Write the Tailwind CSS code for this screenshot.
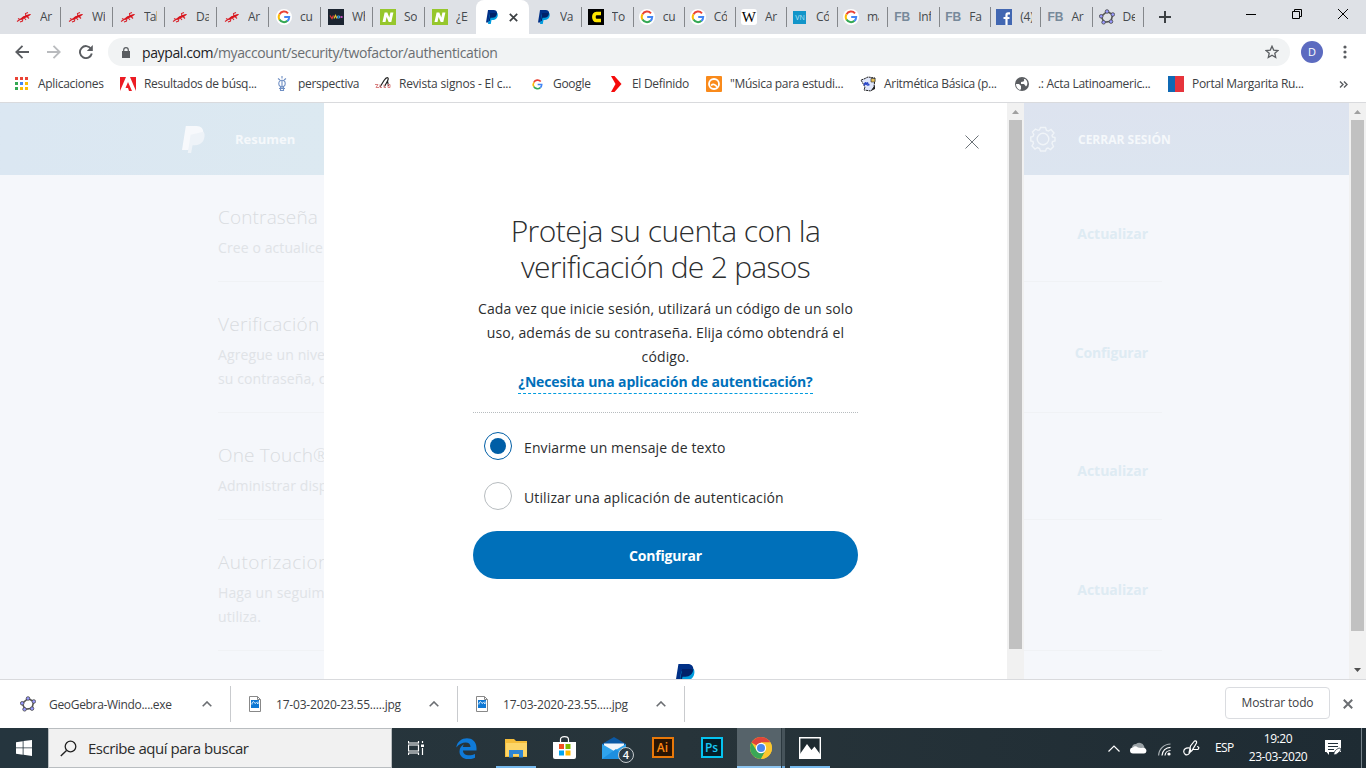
<!DOCTYPE html>
<html lang="es">
<head>
<meta charset="utf-8">
<title>PayPal</title>
<script src="https://cdn.jsdelivr.net/npm/@tailwindcss/browser@4"></script>
</head>
<body class="w-[1366px] h-[768px] overflow-hidden bg-white font-['Open_Sans','Noto_Sans',sans-serif] text-[#3c4043] flex flex-col">
<svg class="hidden">
  <symbol id="red" viewBox="0 0 16 16"><path d="M1 12.500L4 10.500L2 9.500M4 10.500L7 8.500L11 6.500L14.500 5.500M10 7.500L9.500 4.500L12 3.500M11 7.500L13 9.500M7 8.500L6.500 12L4 13M8 8.500L10 11" fill="none" stroke="#d8242c" stroke-width="1.100"/><path d="M4 10.500L7 7.500L11 6L15 5L12.500 7.500L8 9.500L5 11Z" fill="#d8141c"/></symbol>
  <symbol id="g" viewBox="0 0 16 16"><circle cx="8" cy="8" r="8" fill="#fff"/><path d="M12 4.300A5.200 5.200 0 0 0 3.500 5.400" fill="none" stroke="#ea4335" stroke-width="2"/><path d="M3.500 5.300A5.200 5.200 0 0 0 3.500 10.700" fill="none" stroke="#fbbc05" stroke-width="2"/><path d="M3.500 10.600A5.200 5.200 0 0 0 11.500 11.800" fill="none" stroke="#34a853" stroke-width="2"/><path d="M8.200 8H13.200A5.200 5.200 0 0 1 11.400 11.900" fill="none" stroke="#4285f4" stroke-width="2"/></symbol>
  <symbol id="n" viewBox="0 0 16 16"><path d="M0 0H16V16H0Z" fill="#96c72c"/><path d="M2.500 13L4.600 3.500H7.300L9.300 8.500L10.400 3.500H13.400L11.300 13H8.700L6.600 8L5.500 13Z" fill="#fff"/></symbol>
  <symbol id="pp" viewBox="0 0 24 28"><path d="M4 0H15C20 0 23 3 22 8C21 13 17.500 15.500 12.500 15.500H9L7 25H0Z" fill="#003087"/><path d="M22.500 6C25 9 23.500 20 13.500 20H11L9.500 28H4L7.500 9Z" fill="#009cde"/><path d="M8.500 6H19.500L22.300 6.500C21.300 12.500 18 15.500 12.500 15.500H9L7.500 22H5.500Z" fill="#012169"/></symbol>
  <symbol id="geo" viewBox="0 0 16 16"><path d="M8 2.500L13.700 5.500L12 12.300L5 13.300L2.300 7.500Z" fill="none" stroke="#555" stroke-width="1.600"/><g fill="#9999ff" stroke="#444" stroke-width=".8"><circle cx="8" cy="2.500" r="1.800"/><circle cx="13.800" cy="5.500" r="1.800"/><circle cx="12" cy="12.600" r="1.800"/><circle cx="4.600" cy="13.300" r="1.800"/><circle cx="2.200" cy="7.300" r="1.800"/></g></symbol>
  <symbol id="jpg" viewBox="0 0 12 16"><path d="M.5.5H8.500L11.500 3.500V15.500H.5Z" fill="#fff" stroke="#888"/><path d="M8.500.5V3.500H11.500" fill="none" stroke="#888"/><path d="M2 4H10V12H2Z" fill="#0f78d4"/><path d="M3 8.500V6.800L4.500 5.500L6 7.500L7.500 6.500L9 8V5.500" fill="none" stroke="#d5eafb" stroke-width="1"/></symbol>
  <symbol id="up" viewBox="0 0 10 6"><path d="M.7 5.300L5 1L9.300 5.300" fill="none" stroke="#6b6e72" stroke-width="1.600"/></symbol>
</svg>

<!-- tab strip -->
<div class="h-[34px] shrink-0 bg-[#dee1e6] flex text-[12px] leading-4 tracking-[-0.3px] text-[#45494d]">
  <div class="flex pl-[9px] w-[476px] shrink-0">
    <div class="w-[52px] shrink-0 flex items-center pl-[7px] gap-2"><svg class="size-4 shrink-0"><use href="#red"/></svg><span class="w-[13px] overflow-hidden whitespace-nowrap">Ar</span><i class="ml-auto -mr-px w-px h-5 bg-[#84878b] shrink-0 relative right-px"></i></div>
    <div class="w-[52px] shrink-0 flex items-center pl-[7px] gap-2"><svg class="size-4 shrink-0"><use href="#red"/></svg><span class="w-[13px] overflow-hidden whitespace-nowrap">Wi</span><i class="ml-auto -mr-px w-px h-5 bg-[#84878b] shrink-0 relative right-px"></i></div>
    <div class="w-[52px] shrink-0 flex items-center pl-[7px] gap-2"><svg class="size-4 shrink-0"><use href="#red"/></svg><span class="w-[13px] overflow-hidden whitespace-nowrap tracking-[-0.8px]">Tal</span><i class="ml-auto -mr-px w-px h-5 bg-[#84878b] shrink-0 relative right-px"></i></div>
    <div class="w-[52px] shrink-0 flex items-center pl-[7px] gap-2"><svg class="size-4 shrink-0"><use href="#red"/></svg><span class="w-[13px] overflow-hidden whitespace-nowrap">Da</span><i class="ml-auto -mr-px w-px h-5 bg-[#84878b] shrink-0 relative right-px"></i></div>
    <div class="w-[52px] shrink-0 flex items-center pl-[7px] gap-2"><svg class="size-4 shrink-0"><use href="#red"/></svg><span class="w-[13px] overflow-hidden whitespace-nowrap">Ar</span><i class="ml-auto -mr-px w-px h-5 bg-[#84878b] shrink-0 relative right-px"></i></div>
    <div class="w-[52px] shrink-0 flex items-center pl-[7px] gap-2"><svg class="size-4 shrink-0"><use href="#g"/></svg><span class="w-[13px] overflow-hidden whitespace-nowrap">cu</span><i class="ml-auto -mr-px w-px h-5 bg-[#84878b] shrink-0 relative right-px"></i></div>
    <div class="w-[52px] shrink-0 flex items-center pl-[7px] gap-2"><svg class="size-4 shrink-0" viewBox="0 0 16 16"><path d="M0 0H16V16H0Z" fill="#1b2430"/><path d="M2 6.500L4 9.500L5.500 6.500" stroke="#e23b3b" fill="none" stroke-width="1.300"/><path d="M6 9.500L7.500 6.500L9 9.500" stroke="#e0c030" fill="none" stroke-width="1.300"/><path d="M9.500 7H11.500V9H9.500Z" stroke="#3aa0e0" fill="none"/><path d="M12.500 8H14.500" stroke="#c050c0" stroke-width="2"/></svg><span class="w-[13px] overflow-hidden whitespace-nowrap">Wh</span><i class="ml-auto -mr-px w-px h-5 bg-[#84878b] shrink-0 relative right-px"></i></div>
    <div class="w-[52px] shrink-0 flex items-center pl-[7px] gap-2"><svg class="size-4 shrink-0"><use href="#n"/></svg><span class="w-[13px] overflow-hidden whitespace-nowrap">So</span><i class="ml-auto -mr-px w-px h-5 bg-[#84878b] shrink-0 relative right-px"></i></div>
    <div class="w-[51px] shrink-0 flex items-center pl-[7px] gap-2"><svg class="size-4 shrink-0"><use href="#n"/></svg><span class="w-[12px] overflow-hidden whitespace-nowrap">¿Es</span></div>
  </div>
  <div class="w-[53px] shrink-0 bg-white rounded-t-lg flex items-center pl-[10px] gap-[11px]"><svg class="w-[12px] h-[14px]" viewBox="0 0 24 28"><use href="#pp"/></svg><svg class="size-[9px]" viewBox="0 0 9 9"><path d="M.8.8L8.200 8.200M8.200.8L.8 8.200" stroke="#3c4043" stroke-width="1.700"/></svg></div>
  <div class="flex w-[615px] shrink-0">
    <div class="w-[51.1px] shrink-0 flex items-center pl-[7px] gap-2"><svg class="w-4 h-[14px] shrink-0"><use href="#pp"/></svg><span class="w-[13px] shrink-0 overflow-hidden whitespace-nowrap">Va</span><i class="ml-auto w-px h-5 bg-[#84878b] shrink-0"></i></div>
    <div class="w-[51.1px] shrink-0 flex items-center pl-[7.500px] gap-2"><svg class="size-4 shrink-0" viewBox="0 0 16 16"><path d="M0 0H16V16H0Z" fill="#000"/><path d="M13 4.500H8.500C5 4.500 5 11.500 8.500 11.500H13" fill="none" stroke="#ffe600" stroke-width="3.600"/></svg><span class="w-[13px] shrink-0 overflow-hidden whitespace-nowrap">To</span><i class="ml-auto w-px h-5 bg-[#84878b] shrink-0"></i></div>
    <div class="w-[51.1px] shrink-0 flex items-center pl-[7.500px] gap-2"><svg class="size-4 shrink-0"><use href="#g"/></svg><span class="w-[13px] shrink-0 overflow-hidden whitespace-nowrap">cu</span><i class="ml-auto w-px h-5 bg-[#84878b] shrink-0"></i></div>
    <div class="w-[51.1px] shrink-0 flex items-center pl-[7.500px] gap-2"><svg class="size-4 shrink-0"><use href="#g"/></svg><span class="w-[13px] shrink-0 overflow-hidden whitespace-nowrap">Có</span><i class="ml-auto w-px h-5 bg-[#84878b] shrink-0"></i></div>
    <div class="w-[51.1px] shrink-0 flex items-center pl-[7.500px] gap-2"><b class="size-4 shrink-0 rounded-[3px] bg-white text-black font-normal font-['Liberation_Serif',serif] text-[15px] leading-4 tracking-normal flex justify-center">W</b><span class="w-[13px] shrink-0 overflow-hidden whitespace-nowrap">Ar</span><i class="ml-auto w-px h-5 bg-[#84878b] shrink-0"></i></div>
    <div class="w-[51.1px] shrink-0 flex items-center pl-[7.500px] gap-2"><b class="w-[13px] h-[13px] mx-[1.500px] shrink-0 bg-[#1295c9] text-[#bfe6f6] font-normal text-[7px] leading-[13px] text-center tracking-normal">VN</b><span class="w-[13px] shrink-0 overflow-hidden whitespace-nowrap">Có</span><i class="ml-auto w-px h-5 bg-[#84878b] shrink-0"></i></div>
    <div class="w-[51.1px] shrink-0 flex items-center pl-[7.500px] gap-2"><svg class="size-4 shrink-0"><use href="#g"/></svg><span class="w-[12px] shrink-0 overflow-hidden whitespace-nowrap">ma</span><i class="ml-auto w-px h-5 bg-[#84878b] shrink-0"></i></div>
    <div class="w-[51.1px] shrink-0 flex items-center pl-[7.500px] gap-2"><b class="w-4 shrink-0 text-[#77899a] font-bold font-['Liberation_Sans',sans-serif] text-[12px] tracking-normal">FB</b><span class="w-[13px] shrink-0 overflow-hidden whitespace-nowrap">Inf</span><i class="ml-auto w-px h-5 bg-[#84878b] shrink-0"></i></div>
    <div class="w-[51.1px] shrink-0 flex items-center pl-[7.500px] gap-2"><b class="w-4 shrink-0 text-[#77899a] font-bold font-['Liberation_Sans',sans-serif] text-[12px] tracking-normal">FB</b><span class="w-[13px] shrink-0 overflow-hidden whitespace-nowrap">Fa</span><i class="ml-auto w-px h-5 bg-[#84878b] shrink-0"></i></div>
    <div class="w-[51.1px] shrink-0 flex items-center pl-[7.500px] gap-2"><svg class="size-4 shrink-0" viewBox="0 0 16 16"><path d="M0 0H16V16H0Z" fill="#4267b2"/><path d="M14 4.300H12C10.800 4.300 10.500 5 10.500 6V16M7.500 9H13.500" fill="none" stroke="#fff" stroke-width="2.200"/></svg><span class="w-[12px] shrink-0 overflow-hidden whitespace-nowrap">(4)</span><i class="ml-auto w-px h-5 bg-[#84878b] shrink-0"></i></div>
    <div class="w-[51.1px] shrink-0 flex items-center pl-[7.500px] gap-2"><b class="w-4 shrink-0 text-[#77899a] font-bold font-['Liberation_Sans',sans-serif] text-[12px] tracking-normal">FB</b><span class="w-[13px] shrink-0 overflow-hidden whitespace-nowrap">Ar</span><i class="ml-auto w-px h-5 bg-[#84878b] shrink-0"></i></div>
    <div class="w-[51.1px] shrink-0 flex items-center pl-[7.500px] gap-2"><svg class="size-4 shrink-0"><use href="#geo"/></svg><span class="w-[12px] shrink-0 overflow-hidden whitespace-nowrap">De</span><i class="ml-auto w-px h-5 bg-[#84878b] shrink-0"></i></div>
  </div>
  <div class="flex-1 flex pl-[15px]">
    <svg class="size-3 mt-[11px]" viewBox="0 0 12 12"><path d="M6 0V12M0 6H12" stroke="#3c4043" stroke-width="2"/></svg>
    <svg class="w-[10px] h-[10px] ml-[75px] mt-[9px]" viewBox="0 0 10 10"><path d="M0 5.500H10" stroke="#000"/></svg>
    <svg class="w-[10px] h-[10px] ml-[36px] mt-[9px]" viewBox="0 0 10 10"><path d="M.5 2.500H7.500V9.500H.5ZM2.500 2.500V.5H9.500V7.500H7.500" stroke="#000" fill="none"/></svg>
    <svg class="w-[10px] h-[10px] ml-[36px] mt-[9px]" viewBox="0 0 10 10"><path d="M0 0L10 10M10 0L0 10" stroke="#000"/></svg>
  </div>
</div>

<!-- toolbar -->
<div class="h-[36px] shrink-0 flex items-center pl-[15px]">
  <svg class="w-[14px] h-[14px]" viewBox="0 0 14 14"><path d="M14 7H1.500M7.500 .8L1.300 7L7.500 13.200" fill="none" stroke="#5a5d61" stroke-width="1.800"/></svg>
  <svg class="w-[14px] h-[14px] ml-[18px]" viewBox="0 0 14 14"><path d="M0 7H12.500M6.500 .8L12.700 7L6.500 13.200" fill="none" stroke="#b9bbbe" stroke-width="1.800"/></svg>
  <svg class="w-[14px] h-[14px] ml-[18px]" viewBox="0 0 14 14"><path d="M12 3.800A6 6 0 1 0 12.800 8.500" fill="none" stroke="#5a5d61" stroke-width="1.900"/><path d="M13.800 0V6H7.800Z" fill="#5a5d61"/></svg>
  <div class="ml-[15px] w-[1182px] h-[28px] rounded-full bg-[#f1f3f4] flex items-center pl-[14px] pr-[11px]">
    <svg class="w-[8px] h-[11px]" viewBox="0 0 8 11"><path d="M0 4H8V11H0Z" fill="#5a5d61"/><path d="M1.700 4.500V3A2.300 2.300 0 0 1 6.300 3V4.500" fill="none" stroke="#5a5d61" stroke-width="1.200"/></svg>
    <span class="ml-[12px] text-[14px] tracking-[-0.38px] text-[#6a6e72] whitespace-nowrap"><span class="text-[#202124]">paypal.com</span>/myaccount/security/twofactor/authentication</span>
    <svg class="size-[14px] ml-auto" viewBox="0 0 14 14"><path d="M7 1.200L8.700 5.100L13 5.500L9.800 8.300L10.700 12.500L7 10.300L3.300 12.500L4.200 8.300L1 5.500L5.300 5.100Z" fill="none" stroke="#5a5d61" stroke-width="1.300"/></svg>
  </div>
  <span class="ml-[11px] size-[22px] rounded-full bg-[#5c6bc0] text-white text-[11px] flex items-center justify-center">D</span>
  <svg class="w-[4px] h-[14px] ml-[20px]" viewBox="0 0 4 14"><g fill="#5a5d61"><circle cx="2" cy="2" r="1.600"/><circle cx="2" cy="7" r="1.600"/><circle cx="2" cy="12" r="1.600"/></g></svg>
</div>

<!-- bookmarks -->
<div class="h-[33px] shrink-0 border-b border-[#d9dadd] flex items-center pb-[4px] pl-[14px] text-[12px] tracking-[-0.3px] whitespace-nowrap">
  <div class="w-[106px] shrink-0 flex items-center gap-2"><svg class="size-4" viewBox="0 0 16 16"><path d="M1 1h3v3H1Z" fill="#ea4335"/><path d="M6 1h3v3H6ZM11 1h3v3H11Z" fill="#ea4335"/><path d="M1 6h3v3H1ZM1 11h3v3H1Z" fill="#34a853"/><path d="M6 6h3v3H6Z" fill="#4285f4"/><path d="M11 6h3v3H11ZM6 11h3v3H6ZM11 11h3v3H11Z" fill="#fbbc05"/></svg><span>Aplicaciones</span></div>
  <div class="w-[154px] shrink-0 flex items-center gap-2"><svg class="size-4" viewBox="0 0 16 16"><path d="M0 1H6L0 15ZM10 1H16V15ZM8 6L12 15H9L8 12H5.500Z" fill="#ec1c24"/></svg><span>Resultados de búsq...</span></div>
  <div class="w-[101px] shrink-0 flex items-center gap-2"><svg class="size-4" viewBox="0 0 16 16"><g fill="none" stroke="#6f8fc4" stroke-width="1.100"><circle cx="8" cy="7.500" r="3.200"/><path d="M8 4V10M6.500 11H9.500V14.500H6.500ZM4 2.500L6 4M8 0V2.500M12 2.500L10 4M5 12.500H11"/></g></svg><span>perspectiva</span></div>
  <div class="w-[154px] shrink-0 flex items-center gap-2"><svg class="size-4" viewBox="0 0 16 16"><path d="M5 11L9 4.500C12 0 14.500 1.500 12.500 5L9.500 10.500M12.500 5L13.500 10" fill="none" stroke="#222" stroke-width="1.200"/><path d="M0 8.500H3L1 11.500H4M5 8.500V11.500H7M9 8.500V11.500H11M13 8.500H15V11.500H13Z" fill="none" stroke="#d98080"/></svg><span class="tracking-[-0.18px]">Revista signos - El c...</span></div>
  <div class="w-[79px] shrink-0 flex items-center gap-2"><svg class="size-[13px] mx-[1.500px]" viewBox="0 0 16 16"><use href="#g"/></svg><span>Google</span></div>
  <div class="w-[98px] shrink-0 flex items-center gap-2"><svg class="size-4" viewBox="0 0 16 16"><path d="M3 0H6.500L13.500 8L6.500 16H3L7.500 8Z" fill="#f50a0a"/></svg><span>El Definido</span></div>
  <div class="w-[154px] shrink-0 flex items-center gap-2"><svg class="size-4" viewBox="0 0 16 16"><rect width="16" height="16" rx="1" fill="#f98a1b"/><circle cx="8" cy="8" r="5" fill="none" stroke="#fff" stroke-width="1.800"/><path d="M5 9.500Q8 6.500 11.500 11.500" fill="none" stroke="#fff" stroke-width="1.500"/></svg><span>"Música para estudi...</span></div>
  <div class="w-[154px] shrink-0 flex items-center gap-2"><svg class="size-4" viewBox="0 0 16 16"><path d="M4 3L8 1L15 2L14 11L11 15L4 14L5 11L1 4Z" fill="#dfe6fa" stroke="#222" stroke-dasharray="2 .6"/><path d="M4 9.500C5 6 6 6 6 9C7 6 8 6 8 9L9.500 8.500" fill="none" stroke="#2846c8" stroke-width="1.500"/><path d="M11 2.500H15V6H11Z" fill="#e8c25a" stroke="#222" stroke-width=".6"/><path d="M11 15L15 9V13Z" fill="#222"/></svg><span>Aritmética Básica (p...</span></div>
  <div class="w-[154px] shrink-0 flex items-center gap-2"><svg class="size-4" viewBox="0 0 16 16"><circle cx="8" cy="8" r="7" fill="#5a5d61"/><path d="M2 8H5L7 10V13L6 14C3 13 2 10 2 8ZM8 2.500C10 2 11 4 9.500 5.500L7 6V8H10L12 10.500C14 9 14 5 11 3Z" fill="#fff"/></svg><span>.: Acta Latinoameric...</span></div>
  <div class="w-[171px] shrink-0 flex items-center gap-2"><span class="size-4 flex"><i class="w-[7px] bg-[#0f69b4]"></i><i class="w-[9px] bg-[#e6343c]"></i></span><span>Portal Margarita Ru...</span></div>
  <svg class="w-[9px] h-[7px]" viewBox="0 0 9 7"><path d="M1 .5L4 3.500L1 6.500M5 .5L8 3.500L5 6.500" fill="none" stroke="#5a5d61" stroke-width="1.400"/></svg>
</div>

<!-- page -->
<div class="h-[576px] shrink-0 flex overflow-hidden bg-[#f5f7fb]">
  <div class="w-[324px] shrink-0 overflow-hidden">
    <div class="h-[72px] bg-linear-to-r from-[#dbe7f2] to-[#dce9f1] flex items-center pl-[182px]">
      <svg class="w-[23px] h-[27px]" viewBox="0 0 24 28"><path d="M4 0H15C20 0 23 3 22 8C21 13 17.500 15.500 12.500 15.500H9L7 25H0Z" fill="#f7f9fc"/><path d="M22.500 6C25 9 23.500 20 13.500 20H11L9.500 28H6L9 9Z" fill="#eef3f8"/></svg>
      <span class="ml-[30px] mt-px text-[13px] font-bold text-[#f5f8fb]">Resumen</span>
    </div>
    <div class="pl-[218px] whitespace-nowrap text-[14px] leading-6 text-[#e0e3e7] tracking-[0.1px]">
      <div class="h-[107px] pt-[30px] border-b border-[#f0f2f5]"><h3 class="text-[19px] leading-6 mb-[7px] font-light text-[#d9dce0] tracking-[0.15px]">Contraseña</h3><p>Cree o actualice</p></div>
      <div class="h-[131px] pt-[30px] border-b border-[#f0f2f5]"><h3 class="text-[19px] leading-6 mb-[7px] font-light text-[#d9dce0] tracking-[0.3px]">Verificación</h3><p>Agregue un nivel</p><p>su contraseña, co</p></div>
      <div class="h-[107px] pt-[30px] border-b border-[#f0f2f5]"><h3 class="text-[19px] leading-6 mb-[7px] font-light text-[#d9dce0] tracking-[0.15px]">One Touch®</h3><p>Administrar dispositivos</p></div>
      <div class="h-[131px] pt-[30px] border-b border-[#f0f2f5]"><h3 class="text-[19px] leading-6 mb-[7px] font-light text-[#d9dce0] tracking-[0.45px]">Autorizaciones</h3><p>Haga un seguimiento</p><p>utiliza.</p></div>
    </div>
  </div>

  <div class="w-[683px] shrink-0 bg-white flex flex-col items-center overflow-hidden">
    <div class="self-stretch flex justify-end pr-[28px] pt-[32px]"><svg class="size-[14px]" viewBox="0 0 14 14"><path d="M.5.5L13.500 13.500M13.500.5L.5 13.500" stroke="#6c7378" stroke-width="1"/></svg></div>
    <div class="w-[385px] mt-[65px] flex flex-col items-center text-[#2c2e2f] tracking-[0.12px]">
      <h1 class="text-[30px] leading-9 font-light text-center whitespace-nowrap tracking-[-0.56px] -mt-px mb-px"><span class="block">Proteja su cuenta con la</span><span class="block tracking-[-0.7px]">verificación de 2 pasos</span></h1>
      <p class="mt-[11px] text-[14px] leading-6 text-center whitespace-nowrap">Cada vez que inicie sesión, utilizará un código de un solo<br>uso, además de su contraseña. Elija cómo obtendrá el<br>código.</p>
      <a class="mt-px h-[24px] border-b border-dashed border-[#009cde] text-[14px] leading-6 font-bold text-[#0070ba] whitespace-nowrap tracking-[-0.14px]">¿Necesita una aplicación de autenticación?</a>
      <div class="mt-[18px] self-stretch border-b border-dotted border-[#b7bcbf]"></div>
      <div class="self-stretch flex flex-col pl-[11px] pt-[19px] gap-[22px]">
        <label class="flex items-center h-7 text-[14px]"><span class="size-7 rounded-full border border-[#005ea6] flex items-center justify-center"><i class="size-4 rounded-full bg-[#005ea6]"></i></span><span class="ml-[12px] mt-[3px]">Enviarme un mensaje de texto</span></label>
        <label class="flex items-center h-7 text-[14px]"><span class="size-7 rounded-full border border-[#b7bcbf]"></span><span class="ml-[12px] mt-[3px]">Utilizar una aplicación de autenticación</span></label>
      </div>
      <button class="mt-[21px] self-stretch h-12 rounded-full bg-[#0070ba] text-white font-bold text-[14px] tracking-[-0.2px]">Configurar</button>
      <svg class="mt-[85px] ml-[39px] w-[20px] h-[23px]" viewBox="0 0 24 28"><use href="#pp"/></svg>
    </div>
  </div>
  <div class="w-[17px] shrink-0 bg-[#f1f1f1] flex flex-col items-center"><svg class="w-[7px] h-[4px] mt-[7px] mb-[6px]" viewBox="0 0 7 4"><path d="M0 4L3.500 0L7 4Z" fill="#a0a0a0"/></svg><div class="w-[13px] h-[529px] bg-[#c1c1c1]"></div></div>
  <div class="w-[325px] shrink-0">
    <div class="h-[72px] bg-linear-to-b from-[#dde3ef] to-[#dce5f0] flex items-center pl-[6px]">
      <svg class="size-[26px]" viewBox="0 0 26 26"><g fill="none" stroke="#f0f4f8" stroke-width="1.400"><circle cx="13" cy="13" r="5.800"/><path d="M10.500 1.500H15.500L16.500 4.500L18.500 5L21 3.500L24 7L22 9.500L22.500 11L25 11.500V15L22.500 15.500L22 17.500L23.500 20.500L20.500 23.500L18 22L16.500 22.500L15.500 25H10.500L9.500 22.500L7.500 21.500L5 23L2 20L3.500 17.500L3 15.500L.8 15V11L3 10.500L3.800 8.500L2.500 6L5.500 3L8 4.300L9.500 4Z"/></g></svg>
      <span class="ml-[22px] mt-px text-[12px] font-bold text-[#f5f8fb] tracking-[0px]">CERRAR SESIÓN</span>
    </div>
    <div class="w-[138px] text-right text-[14px] font-bold leading-6 tracking-[0px] text-[#deebf3]">
      <div class="h-[107px] pt-[47px] pr-[14px] border-b border-[#f0f2f5]">Actualizar</div>
      <div class="h-[131px] pt-[59px] pr-[14px] border-b border-[#f0f2f5] tracking-[-0.15px]">Configurar</div>
      <div class="h-[107px] pt-[46px] pr-[14px] border-b border-[#f0f2f5]">Actualizar</div>
      <div class="h-[131px] pt-[58px] pr-[14px] border-b border-[#f0f2f5]">Actualizar</div>
    </div>
  </div>
  <div class="w-[17px] shrink-0 bg-[#f1f1f1] flex flex-col items-center"><svg class="w-[7px] h-[4px] mt-[7px] mb-[6px] shrink-0" viewBox="0 0 7 4"><path d="M0 4L3.500 0L7 4Z" fill="#a0a0a0"/></svg><div class="w-[13px] h-[511px] shrink-0 bg-[#c1c1c1]"></div><svg class="w-[7px] h-[4px] mt-[37px] shrink-0" viewBox="0 0 7 4"><path d="M0 0L3.500 4L7 0Z" fill="#505050"/></svg></div>
</div>

<!-- downloads bar -->
<div class="h-[49px] shrink-0 border-t border-[#d9dadd] flex items-center text-[12px] tracking-[-0.2px] whitespace-nowrap">
  <div class="w-[231px] h-9 shrink-0 border-r border-[#c9cbce] flex items-center pl-[20px]"><svg class="size-4"><use href="#geo"/></svg><span class="ml-[13px] mt-0.5 w-[150px] tracking-[-0.32px]">GeoGebra-Windo....exe</span><svg class="ml-[3px] w-[10px] h-[6px]"><use href="#up"/></svg></div>
  <div class="w-[227px] h-9 shrink-0 border-r border-[#c9cbce] flex items-center pl-[18px]"><svg class="w-3 h-4"><use href="#jpg"/></svg><span class="ml-[15px] mt-0.5 w-[150px]">17-03-2020-23.55.....jpg</span><svg class="ml-[3px] w-[10px] h-[6px]"><use href="#up"/></svg></div>
  <div class="w-[227px] h-9 shrink-0 border-r border-[#c9cbce] flex items-center pl-[18px]"><svg class="w-3 h-4"><use href="#jpg"/></svg><span class="ml-[15px] mt-0.5 w-[150px]">17-03-2020-23.55.....jpg</span><svg class="ml-[3px] w-[10px] h-[6px]"><use href="#up"/></svg></div>
  <div class="ml-auto w-[105px] h-8 mb-[2px] border border-[#dadce0] rounded flex items-center justify-center text-[#3c4043] font-medium tracking-[-0.15px]">Mostrar todo</div>
  <svg class="ml-[13px] mr-[13px] size-[10px]" viewBox="0 0 10 10"><path d="M.8.8L9.200 9.200M9.200.8L.8 9.200" stroke="#6b6e72" stroke-width="2"/></svg>
</div>

<!-- taskbar -->
<div class="h-[40px] shrink-0 bg-linear-to-r from-[#25353e] via-[#27343a] to-[#1e2b33] flex text-white">
  <div class="w-[48px] shrink-0 flex items-center justify-center"><svg class="size-4" viewBox="0 0 16 16"><path d="M0 2.200L6.700 1.200V7.500H0ZM7.500 1.100L16 0V7.500H7.500ZM0 8.300H6.700V14.700L0 13.800ZM7.500 8.300H16V16L7.500 14.800Z" fill="#fff"/></svg></div>
  <div class="w-[344px] shrink-0 bg-[#f1f1f1] border border-[#b9bdc0] flex items-center pl-[11px] text-[#2b2b2b]"><svg class="size-[17px]" viewBox="0 0 17 17"><circle cx="10.500" cy="6.500" r="5.300" fill="none" stroke="#222" stroke-width="1.300"/><path d="M6.500 10.500L.8 16" stroke="#222" stroke-width="1.400"/></svg><span class="ml-[11px] text-[15px] tracking-[-0.46px]">Escribe aquí para buscar</span></div>
  <div class="w-[47px] flex items-center justify-center"><svg class="size-4" viewBox="0 0 16 16"><path d="M.5 1V3H10.500V1M.5 15V13H10.500V15M.5 5H10.500V11H.5ZM14.500 1V3M14.500 8V15" fill="none" stroke="#fff" stroke-width="1.200"/><path d="M13 4.500H16V7H13Z" fill="#fff"/></svg></div>
  <div class="w-[53px] pl-px flex items-center justify-center"><svg class="size-[21px]" viewBox="0 0 21 21"><path d="M.3 9.500C1.500-2.500 20.500-3.500 20.500 10V12.500H7C7 18.500 15 18 19 16V19.700C11 23.500 3.500 20 3.500 13.500C3.500 10 5.500 7.500 8 6.200C7.200 7.200 7 8 6.800 9H14.500C14.500 2.500 5 3.500 .3 9.500Z" fill="#0f7ad8"/></svg></div>
  <div class="w-[48px] flex flex-col items-center"><svg class="w-[22px] h-[19px] mt-[11px]" viewBox="0 0 22 19"><path d="M0 0H9L11 2H22V18H0Z" fill="#f5bd3a"/><path d="M1 4H22V17H1Z" fill="#fdd568"/><path d="M4 18.500V11H18V18.500H14V15H8V18.500Z" fill="#2f86d6"/></svg><i class="mt-auto w-[40px] h-[2px] bg-[#76b9ed]"></i></div>
  <div class="w-[49px] flex justify-center"><svg class="w-[23px] h-[23px] mt-[8px]" viewBox="0 0 23 23"><path d="M7.500 6V3.500Q7.500.7 11.500.7T15.500 3.500V6" fill="none" stroke="#fff" stroke-width="1.200"/><path d="M0 6H23V21Q23 23 21 23H2Q0 23 0 21Z" fill="#fff"/><path d="M6 8H11V13H6Z" fill="#f25022"/><path d="M12.500 8H17.500V13H12.500Z" fill="#7fba00"/><path d="M6 14.500H11V19.500H6Z" fill="#00a4ef"/><path d="M12.500 14.500H17.500V19.500H12.500Z" fill="#ffb900"/></svg></div>
  <div class="w-[49px] flex justify-center relative"><svg class="w-[24px] h-[22px] mt-[9px]" viewBox="0 0 24 22"><path d="M0 7L12 0L24 7V22H0Z" fill="#0c59a4"/><path d="M2 6.500H22V14H2Z" fill="#f3f6fa"/><path d="M0 7L12 14L24 7V22H0Z" fill="#2fa3ec"/><path d="M0 22L14 12L24 22Z" fill="#1d8fe0"/></svg><span class="absolute left-[29px] top-[19px] size-4 rounded-full bg-[#2b3a43] border border-[#c6cbce] text-[11px] leading-[14px] text-center font-semibold">4</span></div>
  <div class="w-[49px] flex justify-center pt-[9px]"><span class="w-[22px] h-[21px] bg-[#2a1503] border-2 border-[#e87809] text-[#ff8a14] text-[12px] leading-[17px] font-semibold text-center">Ai</span></div>
  <div class="w-[49px] flex justify-center pt-[9px]"><span class="w-[22px] h-[21px] bg-[#041e29] border-2 border-[#05c3f0] text-[#19c8f5] text-[12px] leading-[17px] font-semibold text-center">Ps</span></div>
  <div class="w-[49px] ml-px flex"><div class="w-[44px] bg-[#56636a] flex flex-col items-center pl-[3px]"><svg class="size-[22px] mt-[9px]" viewBox="0 0 22 22"><circle cx="11" cy="11" r="11" fill="#fbc62f"/><path d="M11 11L1.500 5.500A11 11 0 0 1 20.500 5.500H11Z" fill="#e0443a"/><path d="M1.500 5.500A11 11 0 0 0 11 22L15.500 13.500L11 11L6.500 13.500Z" fill="#3aa757"/><path d="M11 5.500H20.500A11 11 0 0 1 11 22L15.800 13.500Z" fill="#fbc62f"/><circle cx="11" cy="11" r="5.200" fill="#fff"/><circle cx="11" cy="11" r="4" fill="#4a87ee"/></svg><i class="mt-auto -ml-[3px] w-[44px] h-[2px] bg-[#8cc4f0]"></i></div><div class="w-[4px] bg-[#46535a] border-l border-[#2b383f] flex items-end"><i class="w-[3px] h-[2px] bg-[#6ba6d6]"></i></div></div>
  <div class="w-[48px] flex flex-col items-center"><svg class="w-[22px] h-[22px] mt-[9px]" viewBox="0 0 22 22"><path d="M.7.7H21.300V21.300H.7Z" fill="#1d2a30" stroke="#fff" stroke-width="1.400"/><path d="M1 17L8 7L12.500 13L15.500 9.500L21 17V21H1Z" fill="#fff"/></svg><i class="mt-auto w-[40px] h-[2px] bg-[#76b9ed]"></i></div>
  <div class="ml-auto flex items-center">
    <svg class="w-[12px] h-[7px]" viewBox="0 0 12 7"><path d="M.5 6.500L6 1L11.500 6.500" fill="none" stroke="#fff" stroke-width="1.200"/></svg>
    <svg class="ml-[10px] w-[17px] h-[12px]" viewBox="0 0 17 12"><path d="M2 6A4 4 0 0 1 6 2A5 5 0 0 1 14 4L15 7L8 9Z" fill="#9aa2a6"/><path d="M3 11.500A3 3 0 0 1 3 5.500Q5 3 8 5.500L11 6Q16 5 16.500 9Q16 11.500 14 11.500Z" fill="#fff"/></svg>
    <svg class="ml-[11px] mt-[3px] w-[13px] h-[13px]" viewBox="0 0 13 13"><g fill="none" stroke="#aab1b5" stroke-width="1.200"><path d="M.6 12.500A12 12 0 0 1 12.500 1"/><path d="M4 12.500A8.500 8.500 0 0 1 12.500 4.300" stroke="#fff"/><path d="M7 12.500A5.500 5.500 0 0 1 12.500 7.500" stroke="#fff"/></g><circle cx="11" cy="11" r="1.600" fill="#fff"/></svg>
    <svg class="ml-[12px] w-[17px] h-[16px]" viewBox="0 0 17 16"><path d="M6 13L7.500 6L11.500 1Q14 .5 13.500 3L9 10.500L6 13M6.500 8C2 7.500.5 10 .8 12S3 15.500 5 14.500S7.500 11 7.500 8.500M10 9.500H15Q17 7 14 6.500" fill="none" stroke="#fff" stroke-width="1.200"/></svg>
    <span class="ml-[15px] w-[21px] text-[12px] tracking-[-0.6px]">ESP</span>
    <div class="ml-[9px] w-[66px] text-center text-[12px] leading-[18px] tracking-[-0.4px] whitespace-nowrap">19:20<br>23-03-2020</div>
    <svg class="ml-[14px] w-[17px] h-[16px]" viewBox="0 0 17 16"><path d="M0 0H16V12H4V15L1.500 12H0Z" fill="#fff"/><path d="M3 3.500H13M3 6.500H13M3 9.500H9" stroke="#22303a" stroke-width="1.200"/><path d="M9 15C8 11 14 7 15.500 8.500S12 15 9 15Z" fill="#fff" stroke="#22303a" stroke-width=".8"/></svg>
    <i class="ml-[19px] mr-[4px] w-px h-10 bg-[#76828a]"></i>
  </div>
</div>
</body>
</html>
